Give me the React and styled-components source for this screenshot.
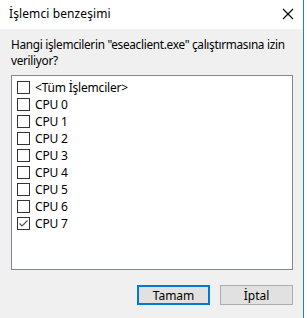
import React from 'react';
import styled, { createGlobalStyle } from 'styled-components';

const Global = createGlobalStyle`
  html, body { margin:0; padding:0; background:#fff; }
  body { font-family:"Noto Sans", "Open Sans", sans-serif; font-size:12px; color:#000; }
`

const Screen = styled.div`
  width:307px; height:318px; display:flex; overflow:hidden;
  background:#fff;
`
const Window = styled.div`
  width:303px; height:318px; display:flex; flex-direction:column;
  border-right:1px solid #1883d7; background:#f0f0f0;
`
const TitleBar = styled.div`
  height:29px; background:#fff; display:flex; align-items:center;
  justify-content:space-between; padding:0 9px 0 9px;
`
const Title = styled.span`
  font-size:12px; letter-spacing:0.1px; margin-top:-3px;
`
const Close = styled.svg`
  width:12px; height:12px; margin-right:0; margin-top:-2px;
`
const Body = styled.div`
  flex:1; display:flex; flex-direction:column; padding:7px 10px 0 11px;
`
const Prompt = styled.p`
  margin:0; font-size:11.8px; line-height:16px; letter-spacing:-0.3px;
  white-space:nowrap;
`
const ListBox = styled.div`
  margin-top:7px; width:282px; height:195px; box-sizing:border-box;
  border:1px solid #828790; background:#fff; padding:3px 0 0 5px;
`
const Row = styled.label`
  display:flex; align-items:center; height:17px; gap:5px;
`
const Box = styled.span`
  width:13px; height:13px; box-sizing:border-box; border:1px solid #333;
  display:flex; align-items:center; justify-content:center; background:#fff;
`
const Label = styled.span`
  font-size:12px; letter-spacing:-0.2px; color:#000;
`
const Buttons = styled.div`
  display:flex; justify-content:flex-end; gap:10px; margin-top:15px;
`
const Button = styled.button`
  width:73px; height:20px; box-sizing:border-box; padding:0;
  font-family:inherit; font-size:12px; color:#000; background:#e1e1e1;
  border:${p => p.$primary ? '2px solid #0078d7' : '1px solid #adadad'};
`

const items = ['<Tüm İşlemciler>', 'CPU 0', 'CPU 1', 'CPU 2', 'CPU 3', 'CPU 4', 'CPU 5', 'CPU 6', 'CPU 7']

const App = () => {
  return (
    <Screen>
      <Global />
      <Window>
        <TitleBar>
          <Title>İşlemci benzeşimi</Title>
          <Close viewBox="0 0 12 12">
            <path d="M1 1 L11 11 M11 1 L1 11" stroke="#000" strokeWidth="1.1" />
          </Close>
        </TitleBar>
        <Body>
          <Prompt>Hangi işlemcilerin "eseaclient.exe" çalıştırmasına izin<br />veriliyor?</Prompt>
          <ListBox>
            {items.map((t, i) => (
              <Row key={t}>
                <Box>
                  {i === 8 && (
                    <svg width="11" height="11" viewBox="0 0 11 11">
                      <path d="M1.5 5.5 L4 8 L9.5 2.5" stroke="#555" strokeWidth="1.2" fill="none" />
                    </svg>
                  )}
                </Box>
                <Label>{t}</Label>
              </Row>
            ))}
          </ListBox>
          <Buttons>
            <Button $primary>Tamam</Button>
            <Button>İptal</Button>
          </Buttons>
        </Body>
      </Window>
    </Screen>
  );
};

export default App;
